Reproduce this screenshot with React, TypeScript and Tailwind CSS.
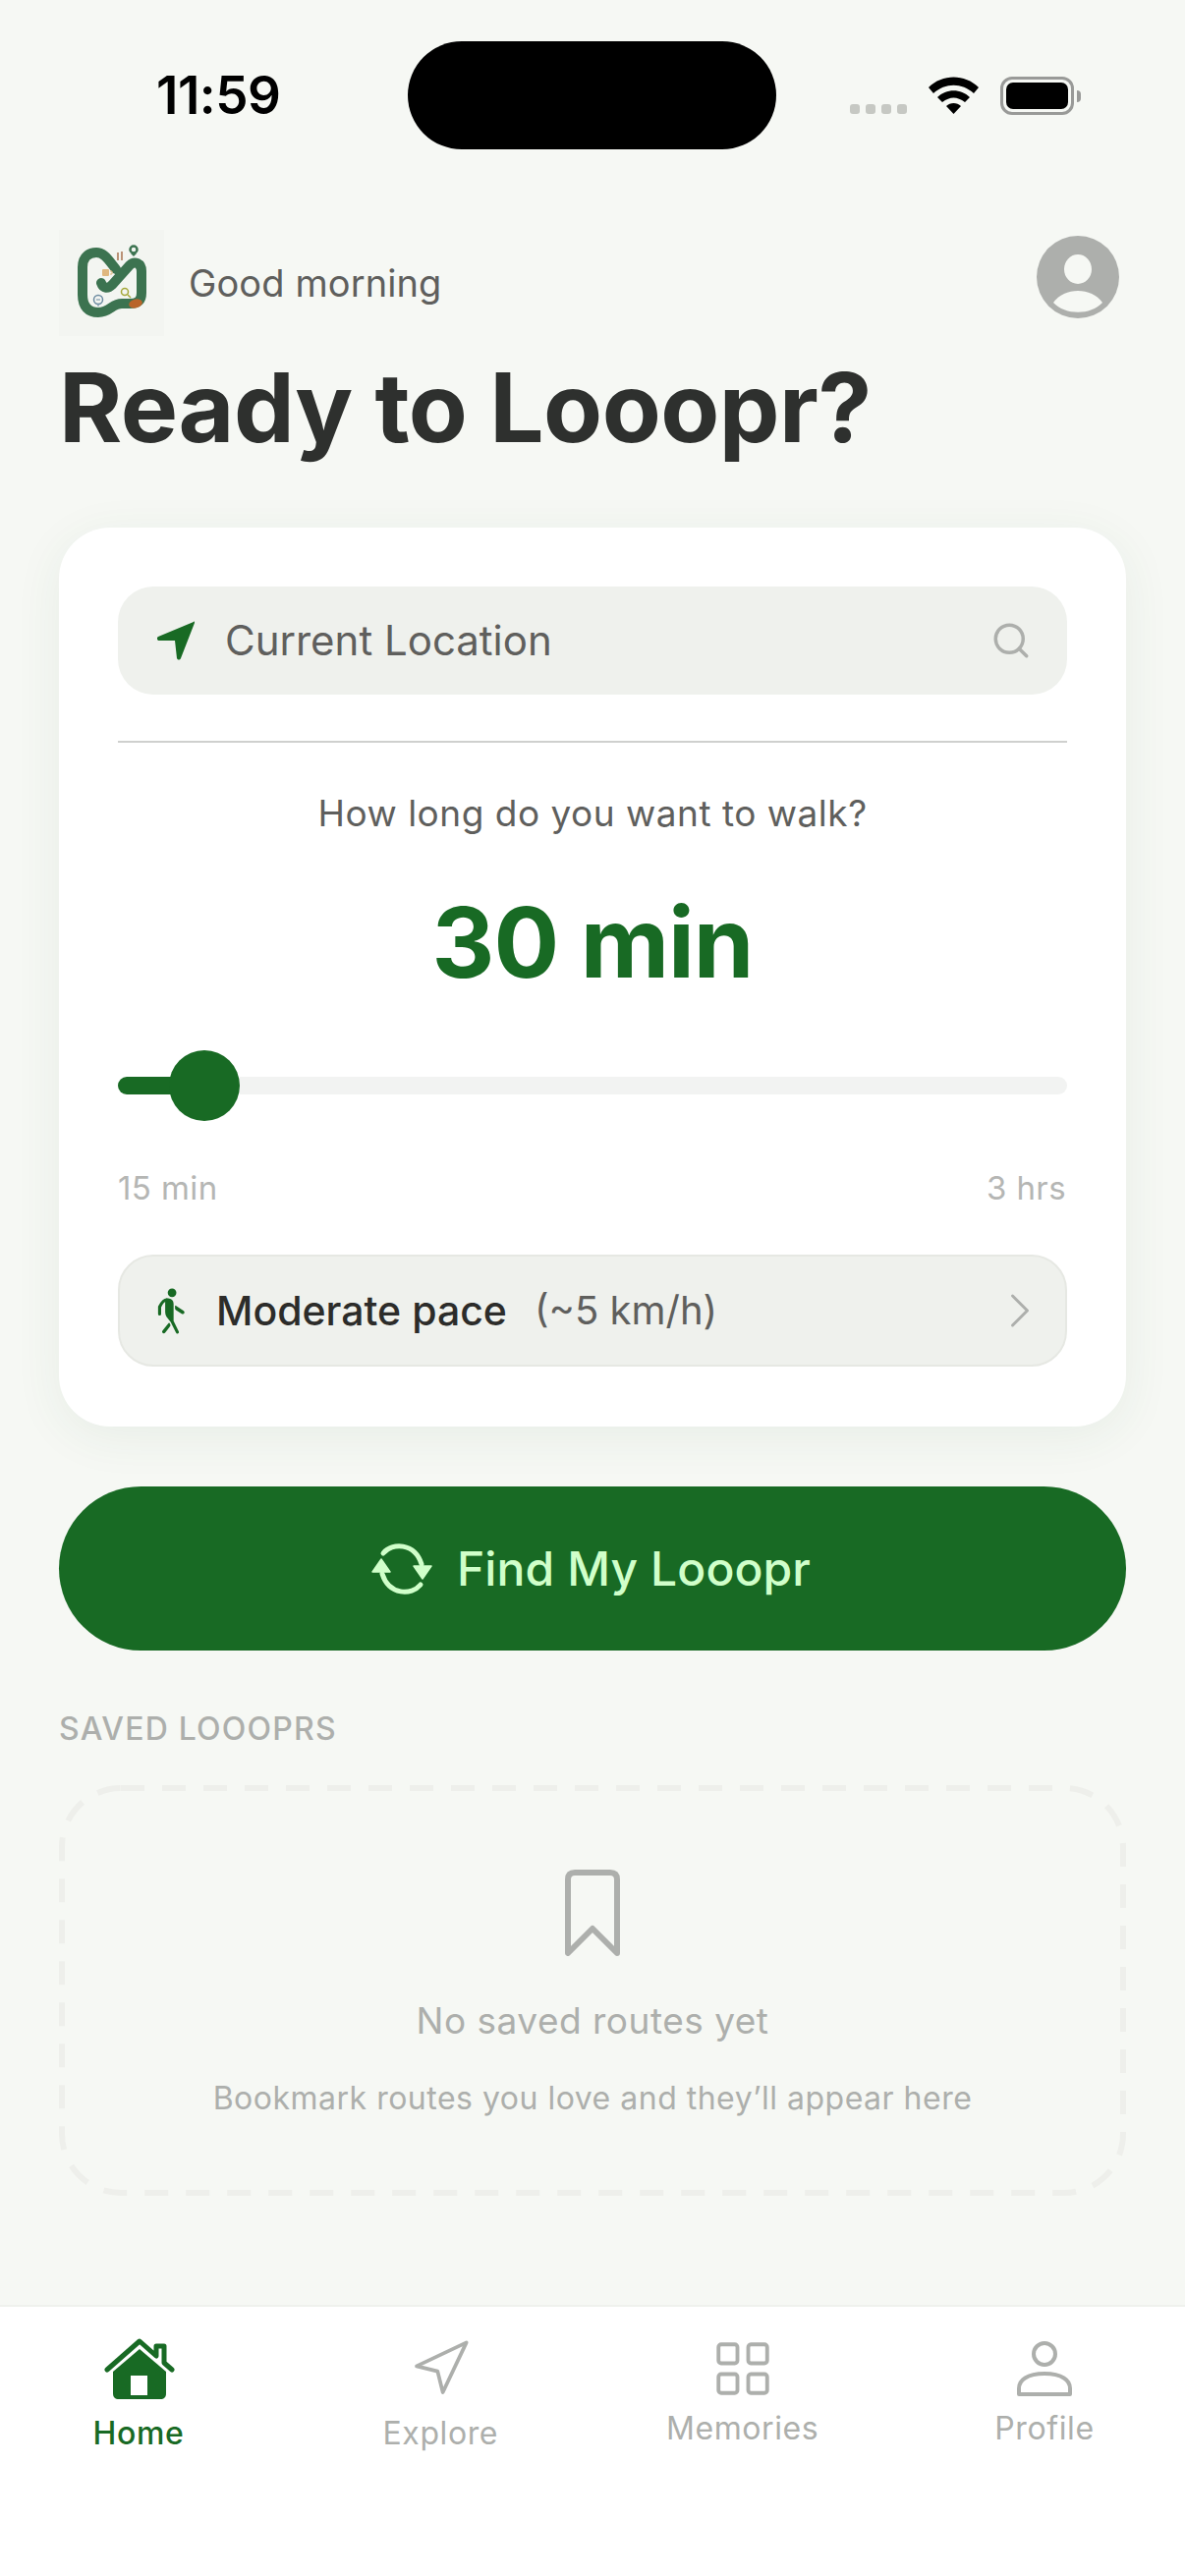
import { ChevronRight, LayoutGrid, Navigation, Search } from "lucide-react";
import { IoWalk } from "react-icons/io5";

function StatusBar() {
  return (
    <div className="flex h-[152px] items-start pt-[42px]">
      <div className="flex h-[110px] w-[415px] items-center pl-[159px]">
        <span className="text-[53px] leading-none font-semibold tracking-[-0.5px] text-black">11:59</span>
      </div>
      <div className="h-[110px] w-[375px] rounded-full bg-black" />
      <div className="flex h-[110px] flex-1 items-start pt-[36px] pl-[75px]">
        <div className="mt-[28px] flex gap-[6px]">
          {[0, 1, 2, 3].map((i) => (
            <span key={i} className="h-[10px] w-[10px] rounded-[3px] bg-[#c6c8c3]" />
          ))}
        </div>
        <svg className="ml-[22px]" width="51" height="38" viewBox="0 0 51 38" fill="black">
          <path d="M0 11 C14 -3 37 -3 51 11 L46 17 C34 6 17 6 5 17 Z" />
          <path d="M9 21 C18 12 33 12 42 21 L37 26 C29 20 22 20 14 26 Z" />
          <path d="M18 30 C22 26 29 26 33 30 L25.5 38 Z" />
        </svg>
        <div className="ml-[22px] flex items-center">
          <div className="h-[39px] w-[75px] rounded-[12px] border-[3px] border-[#999a98] p-[3px]">
            <div className="h-full w-full rounded-[7px] bg-black" />
          </div>
          <div className="ml-[3px] h-[12px] w-[4px] rounded-r-full bg-[#999a98]" />
        </div>
      </div>
    </div>
  );
}

function Logo() {
  return (
    <div className="h-[108px] w-[107px] bg-[#f3f5f1]">
      <svg width="107" height="108" viewBox="20 14 107 108" fill="none">
        <path
          d="M63 68 C65 74 70 74 74 70 L92 50 C97 45 104 48 104 56 L104 78 C104 86 100 89 92 89 L84 89 C74 89 72 98 60 98 C50 98 44 92 44 80 L44 52 C44 40 52 37 58 37 C66 37 70 44 78 54"
          stroke="#3c7350"
          strokeWidth="10"
          strokeLinecap="round"
        />
        <ellipse cx="98" cy="89" rx="7" ry="4.5" transform="rotate(-15 98 89)" fill="#b9652b" />
        <rect x="64" y="54" width="7" height="7" rx="1" fill="#dfb77f" />
        <path d="M72 56 h2 v3 h-2" stroke="#dfb77f" />
        <path d="M80 37 V45 M84 36 V45" stroke="#a8714f" strokeWidth="1.5" />
        <circle cx="96" cy="34" r="3.5" stroke="#3c7350" strokeWidth="2.5" />
        <path d="M93 38 L96 41 L99 38" fill="#3c7350" />
        <circle cx="60" cy="85" r="4.5" stroke="#6b8aa0" strokeWidth="1.5" />
        <path d="M60 90 V92 M58 85 h4" stroke="#6b8aa0" />
        <circle cx="87" cy="77" r="3.5" stroke="#a5a83a" strokeWidth="1.5" />
        <path d="M90 80 L93 83" stroke="#a5a83a" strokeWidth="1.5" />
      </svg>
    </div>
  );
}

function Avatar() {
  return (
    <svg className="mb-[12px]" width="84" height="84" viewBox="0 0 84 84">
      <circle cx="42" cy="42" r="42" fill="#adafac" />
      <ellipse cx="42" cy="34" rx="14" ry="15" fill="#f6f8f4" />
      <path d="M17 68 C28 52 56 52 67 68 C55 81 29 81 17 68 Z" fill="#f6f8f4" />
    </svg>
  );
}

function LocationField() {
  return (
    <div className="flex h-[110px] items-center rounded-[36px] bg-[#eff1ed] pr-[36px] pl-[40px]">
      <svg width="38" height="40" viewBox="0 0 38 40" fill="#186a24">
        <path d="M37 1 C38 0 38 1 38 2 L24 38 C23 40 21 40 20 38 L18 20 L2 20 C0 20 -1 17 1 16 Z" />
      </svg>
      <span className="ml-[31px] flex-1 text-[42px] leading-none text-[#5f5f5d]">Current Location</span>
      <Search size={42} strokeWidth={2} className="text-[#adafac]" />
    </div>
  );
}

function PaceRow() {
  return (
    <div className="flex h-[114px] items-center rounded-[36px] border-2 border-[#e6e8e3] bg-[#eff1ed] pr-[16px] pl-[28px]">
      <IoWalk size={50} className="text-[#186a24]" />
      <span className="ml-[20px] text-[41px] leading-none font-medium text-[#2c2c2a]">Moderate pace</span>
      <span className="ml-[28px] flex-1 text-[40px] leading-none text-[#5f5f5d]">(~5 km/h)</span>
      <ChevronRight size={60} strokeWidth={1.2} className="text-[#adafac]" />
    </div>
  );
}

function Slider() {
  return (
    <div className="flex h-[72px] items-center">
      <div className="h-[18px] w-[60px] rounded-l-full bg-[#186a24]" />
      <div className="-ml-[8px] h-[72px] w-[72px] shrink-0 rounded-full bg-[#186a24]" />
      <div className="h-[18px] flex-1 rounded-r-full bg-[#f2f3f2]" />
    </div>
  );
}

function RouteCard() {
  return (
    <div className="mx-[60px] mt-[63px] h-[915px] rounded-[52px] bg-white px-[60px] pt-[60px] shadow-[0_10px_50px_rgba(40,100,50,0.07)]">
      <LocationField />
      <div className="mt-[47px] h-[2px] bg-[#cfd0ce]" />
      <p className="mt-[50px] text-center text-[37px] leading-[44px] tracking-[0.5px] text-[#5f5f5d]">How long do you want to walk?</p>
      <p className="mt-[51px] text-center text-[99px] leading-[116px] font-bold tracking-[-1px] text-[#186a24]">30 min</p>
      <div className="mt-[52px]">
        <Slider />
      </div>
      <div className="mt-[50px] flex justify-between text-[33px] leading-[36px] tracking-[0.4px] text-[#b5b6b4]">
        <span>15 min</span>
        <span className="pr-[1px]">3 hrs</span>
      </div>
      <div className="mt-[50px]">
        <PaceRow />
      </div>
    </div>
  );
}

function FindButton() {
  return (
    <div className="mx-[60px] mt-[61px] flex h-[167px] items-center justify-center rounded-[84px] bg-[#186a24] pr-[4px]">
      <svg width="64" height="54" viewBox="0 0 64 54" fill="none">
        <path d="M13 11 C22 0 45 0 52 22" stroke="#d0ffca" strokeWidth="5" strokeLinecap="round" />
        <path d="M51 43 C42 54 19 54 12 32" stroke="#d0ffca" strokeWidth="5" strokeLinecap="round" />
        <path d="M44 24 L62 24 L53 37 Z" fill="#d0ffca" stroke="#d0ffca" strokeWidth="1.5" strokeLinejoin="round" />
        <path d="M2 30 L20 30 L11 17 Z" fill="#d0ffca" stroke="#d0ffca" strokeWidth="1.5" strokeLinejoin="round" />
      </svg>
      <span className="ml-[24px] text-[48px] leading-none font-medium tracking-[0.1px] text-[#d0ffca]">Find My Looopr</span>
    </div>
  );
}

function SavedSection() {
  return (
    <div className="mx-[60px]">
      <p className="mt-[61px] text-[32px] leading-[38px] font-medium tracking-[1.2px] text-[#adafac]">SAVED LOOOPRS</p>
      <div className="relative mt-[38px] flex h-[418px] flex-col items-center pt-[86px]">
        <svg className="absolute inset-0" width="1086" height="418" fill="none">
          <rect x="3" y="3" width="1080" height="412" rx="60" stroke="#eeefeb" strokeWidth="6" strokeDasharray="24 18" />
        </svg>
        <svg width="56" height="88" viewBox="0 0 56 88" fill="none" stroke="#adafac" strokeWidth="6" strokeLinejoin="round">
          <path d="M3 85 V10 Q3 3 10 3 H46 Q53 3 53 10 V85 L28 60 Z" />
        </svg>
        <p className="mt-[44px] text-[37px] leading-[44px] tracking-[0.5px] text-[#adafac]">No saved routes yet</p>
        <p className="mt-[37px] text-[32px] leading-[40px] tracking-[0.5px] text-[#adafac]">Bookmark routes you love and they’ll appear here</p>
      </div>
    </div>
  );
}

function HomeIcon() {
  return (
    <svg className="ml-[2px]" width="72" height="62" viewBox="0 0 72 62" fill="#186a24">
      <path d="M3 32 L36 3 L53 18 V8 H61 V25 L69 32" fill="none" stroke="#186a24" strokeWidth="5" strokeLinecap="round" strokeLinejoin="round" />
      <path d="M36 11 L63 34 V56 C63 60 61 62 57 62 H15 C11 62 9 60 9 56 V34 Z" />
      <rect x="27" y="38" width="17" height="20" fill="white" />
    </svg>
  );
}

function ProfileIcon() {
  return (
    <svg width="56" height="56" viewBox="0 0 56 56" fill="none" stroke="#adafac" strokeWidth="4">
      <circle cx="28" cy="13" r="11" />
      <path d="M2 54 V48 C2 40 10 33 28 33 C46 33 54 40 54 48 V54 Z" strokeLinejoin="round" />
    </svg>
  );
}

function NavItem({ label, icon, active, raised }: { label: string; icon: React.ReactNode; active?: boolean; raised?: boolean }) {
  return (
    <div className="flex w-[164px] flex-col items-center">
      <div className="flex h-[62px] items-center justify-center">{icon}</div>
      <span
        className={
          (raised ? "mt-[12px] " : "mt-[17px] ") +
          (active ? "font-medium text-[#186a24] " : "text-[#adafac] ") +
          "text-[32px] leading-[36px] tracking-[0.6px]"
        }
      >
        {label}
      </span>
    </div>
  );
}

function BottomNav() {
  return (
    <div className="mt-auto flex h-[276px] justify-between border-t-2 border-[#eff1ed] bg-white pt-[32px] pr-[61px] pl-[59px]">
      <NavItem label="Home" active icon={<HomeIcon />} />
      <NavItem
        label="Explore"
        icon={<Navigation size={64} strokeWidth={1.4} className="text-[#adafac]" />}
      />
      <NavItem
        label="Memories"
        raised
        icon={<LayoutGrid size={66} strokeWidth={1.4} className="text-[#adafac]" />}
      />
      <NavItem label="Profile" raised icon={<ProfileIcon />} />
    </div>
  );
}

export default function App() {
  return (
    <div className="flex h-[2622px] w-[1206px] flex-col overflow-hidden bg-[#f6f8f4] font-['Inter',sans-serif]">
      <StatusBar />
      <div className="mt-[82px] flex h-[108px] items-center pr-[67px] pl-[60px]">
        <Logo />
        <span className="ml-[25px] flex-1 text-[38px] leading-none tracking-[0.1px] text-[#5f5f5d]">Good morning</span>
        <Avatar />
      </div>
      <h1 className="mt-[14px] pl-[60px] text-[98px] leading-[118px] font-bold tracking-[-0.5px] text-[#2e302e]">Ready to Looopr?</h1>
      <RouteCard />
      <FindButton />
      <SavedSection />
      <BottomNav />
    </div>
  );
}
